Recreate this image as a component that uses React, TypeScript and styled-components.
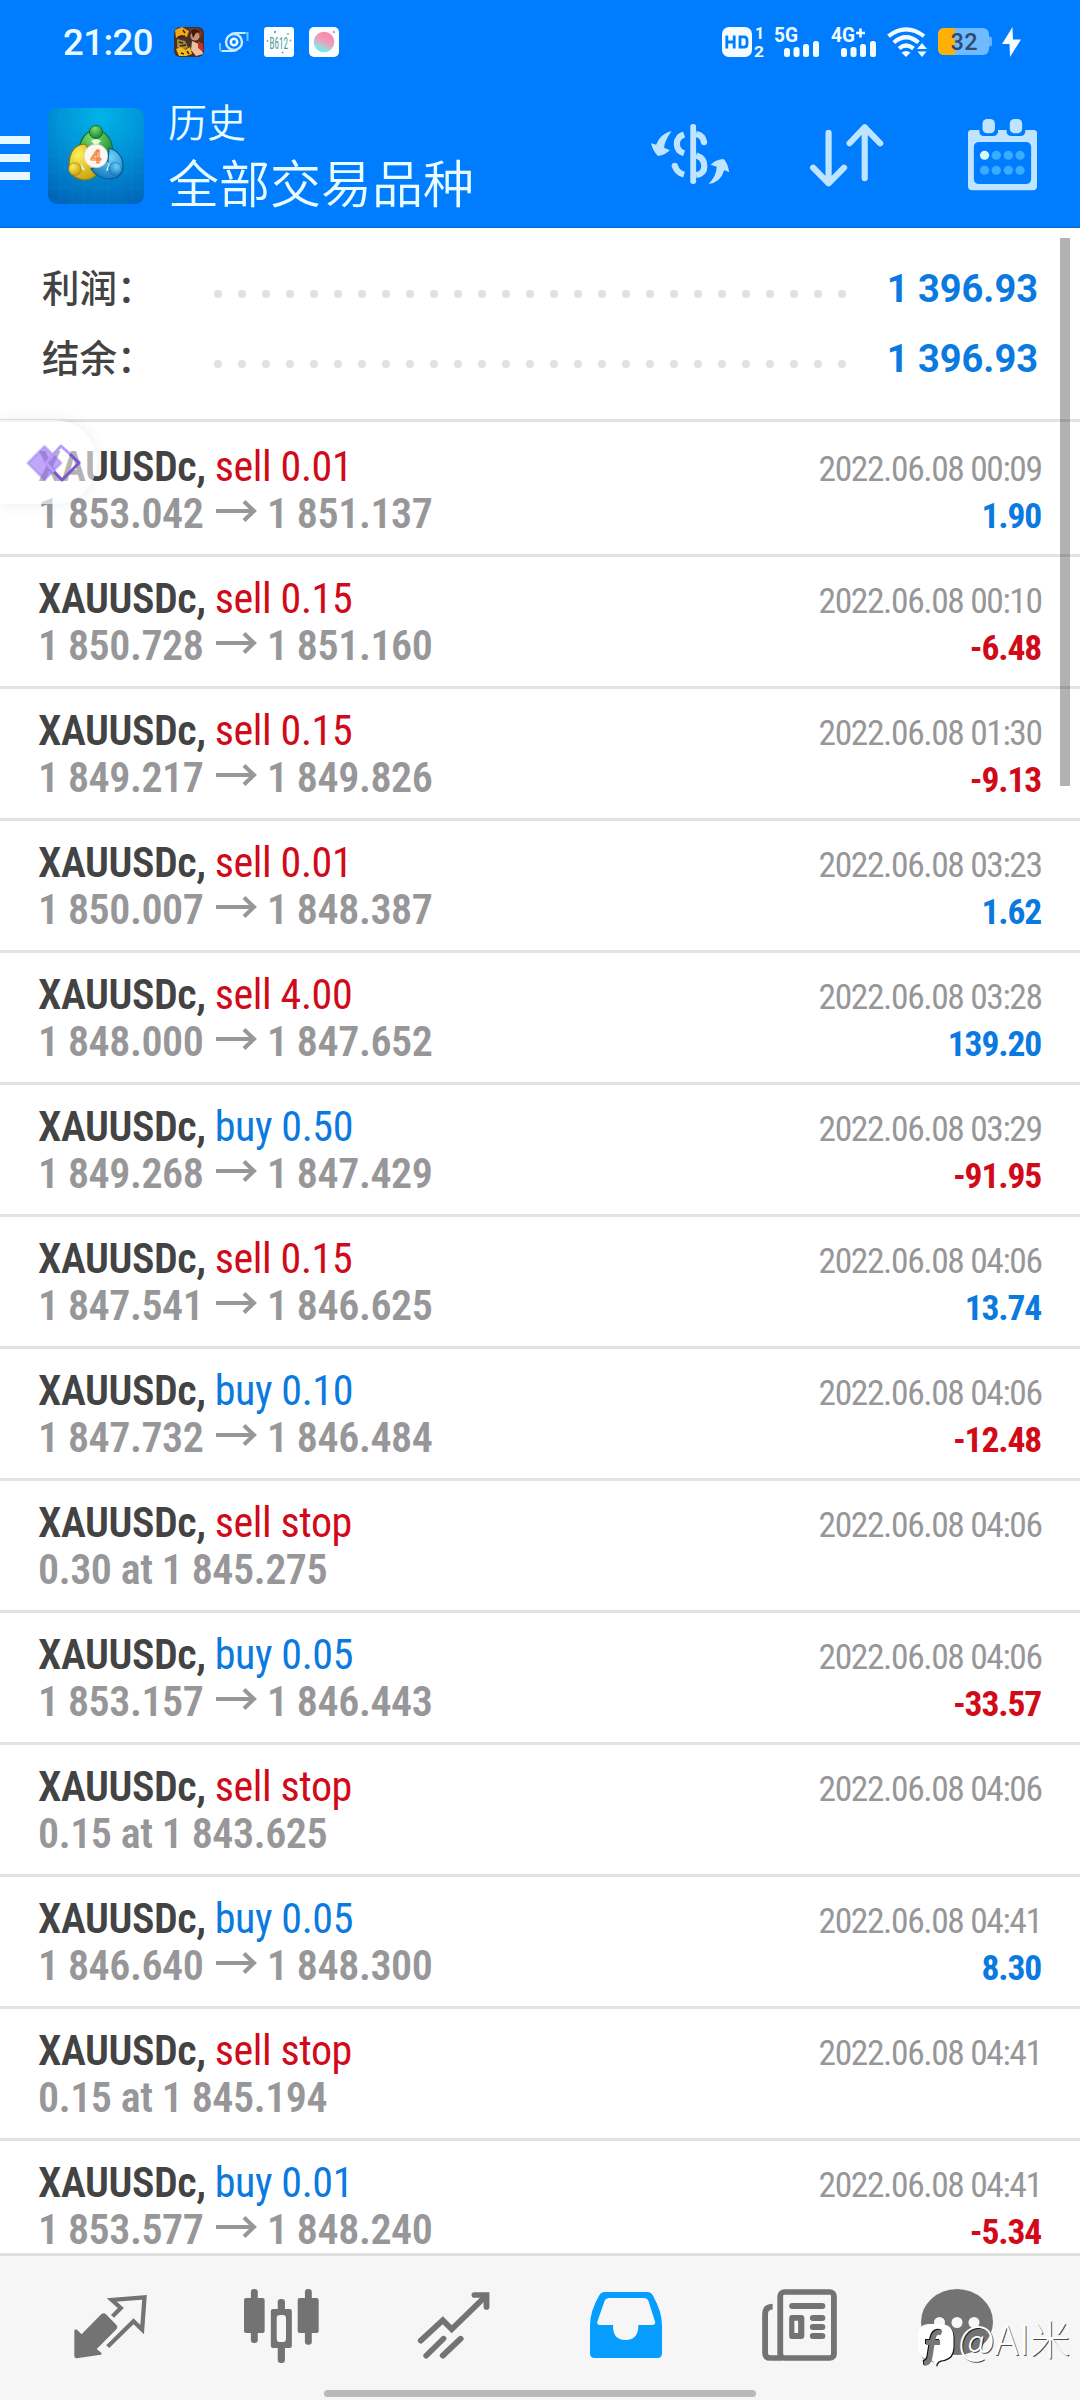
import React from "react";
import styled, { createGlobalStyle } from "styled-components";

const GlobalStyle = createGlobalStyle`
  * { box-sizing: border-box; }
  body { margin: 0; background: #fff; font-family: Roboto, "Noto Sans CJK SC", sans-serif; }
  svg { display: block; flex: none; overflow: visible; }
`;

const RED = "#d00a18";
const BLUE = "#0a7ae0";

const Screen = styled.div`
  position: relative;
  width: 1080px;
  height: 2400px;
  display: flex;
  flex-direction: column;
  overflow: hidden;
  background: #fff;
`;

/* ---------- top ---------- */
const TopBar = styled.header`
  flex: none;
  height: 228px;
  background: #007cff;
  border-bottom: 1px solid #0a66c8;
  display: flex;
  flex-direction: column;
`;
const StatusBar = styled.div`
  height: 84px;
  display: flex;
  justify-content: space-between;
  padding: 0 59px 0 63px;
  align-items: center;
`;
const StatusGroup = styled.div<{ $gap: number }>`
  display: flex;
  align-items: center;
  gap: ${(p) => p.$gap}px;
`;
const Clock = styled.span`
  width: 96px;
  color: #e9fbff;
  font-size: 36.5px;
  line-height: 44px;
  font-weight: 500;
  letter-spacing: -0.5px;
  padding-top: 2px;
`;
const Toolbar = styled.div`
  height: 144px;
  display: flex;
  align-items: flex-start;
`;
const MenuButton = styled.div`
  width: 30px;
  margin-top: 52px;
  display: flex;
  flex-direction: column;
  gap: 10px;
`;
const MenuBar = styled.i`
  height: 8px;
  background: #e6f8ff;
`;
const LogoBox = styled.div`
  margin: 24px 0 0 18px;
`;
const Titles = styled.div`
  margin: 11px 0 0 24px;
  width: 483px;
  color: #e9fcff;
  font-family: "Noto Sans CJK SC", sans-serif;
  font-weight: 350;
`;
const Caption = styled.div`
  font-size: 39px;
  line-height: 50px;
`;
const Title = styled.div`
  font-size: 51px;
  line-height: 72px;
  white-space: nowrap;
`;
const Actions = styled.div`
  display: flex;
  align-items: flex-start;
`;
const ActionButton = styled.div<{ $top: number; $right: number }>`
  padding-top: ${(p) => p.$top}px;
  margin-right: ${(p) => p.$right}px;
`;

/* ---------- summary ---------- */
const Content = styled.main`
  flex: 1;
  min-height: 0;
  overflow: hidden;
  background: #fff;
`;
const Summary = styled.section`
  height: 194px;
  padding: 25px 42px 0 42px;
  border-bottom: 3px solid #e2e2e2;
`;
const SummaryRow = styled.div`
  height: 70px;
  display: flex;
  align-items: center;
`;
const SummaryLabel = styled.span`
  width: 172px;
  color: #434343;
  font: 500 37.5px/70px "Noto Sans CJK SC", sans-serif;
  white-space: nowrap;
  padding-bottom: 4px;
`;
const Dots = styled.span`
  display: flex;
  gap: 16px;
  padding-top: 11px;
`;
const Dot = styled.i`
  width: 8px;
  height: 8px;
  border-radius: 50%;
  background: #e1e1e1;
`;
const SummaryValue = styled.span`
  margin-left: auto;
  color: ${BLUE};
  font-size: 38px;
  font-weight: 700;
  line-height: 70px;
  padding-top: 2px;
`;

/* ---------- deals ---------- */
const Deal = styled.article<{ $first: boolean }>`
  height: ${(p) => (p.$first ? 135 : 132)}px;
  padding: ${(p) => (p.$first ? 22 : 19)}px 38px 0 38px;
  border-bottom: 3px solid #e2e2e2;
  font-family: "Roboto Condensed", Roboto, sans-serif;
`;
const Line = styled.div`
  height: 46.67px;
  line-height: 46.67px;
  display: flex;
  justify-content: space-between;
  align-items: baseline;
  white-space: nowrap;
`;
const Instrument = styled.span`
  font-size: 42px;
  font-weight: 650;
  color: #434343;
  letter-spacing: -0.45px;
`;
const Side = styled.span<{ $color: string }>`
  font-weight: 400;
  color: ${(p) => p.$color};
  letter-spacing: -0.4px;
`;
const Prices = styled.span`
  display: flex;
  align-items: baseline;
  font-size: 42px;
  font-weight: 650;
  color: #979799;
  letter-spacing: -0.45px;
`;
const PriceArrow = styled.svg`
  margin: 0 10px 0 12.5px;
  position: relative;
  top: -6px;
`;
const Stamp = styled.span`
  font-size: 35.5px;
  font-weight: 400;
  color: #979799;
  letter-spacing: -1.4px;
  margin-right: 0.4px;
`;
const Amount = styled.span<{ $color: string }>`
  font-size: 35.5px;
  font-weight: 700;
  color: ${(p) => p.$color};
  letter-spacing: -1.1px;
  margin-right: 0.8px;
`;

/* ---------- overlays ---------- */
const ScrollThumb = styled.div`
  position: absolute;
  left: 1060px;
  top: 238px;
  width: 10px;
  height: 548px;
  background: rgba(0, 0, 0, 0.3);
`;
const Bubble = styled.div`
  position: absolute;
  left: 0;
  top: 420px;
  width: 97px;
  height: 84px;
  border-radius: 0 42px 42px 0;
  background: rgba(255, 255, 255, 0.6);
  box-shadow: 0 0 14px rgba(60, 60, 110, 0.09);
  padding: 22px 0 0 24px;
`;
const Watermark = styled.div`
  position: absolute;
  left: 916px;
  top: 2311px;
  display: flex;
  align-items: center;
`;
const WatermarkText = styled.span`
  margin-left: 3px;
  font: 300 40.5px/54px "Noto Sans CJK SC", sans-serif;
  color: #fff;
  text-shadow: 1px 1px 0 rgba(0, 0, 0, 0.7);
  white-space: nowrap;
  padding-bottom: 7px;
`;

/* ---------- bottom ---------- */
const BottomBar = styled.footer`
  flex: none;
  height: 147px;
  border-top: 3px solid #dfdfdf;
  background: #f6f6f6;
  display: flex;
  flex-direction: column;
  justify-content: space-between;
  align-items: center;
`;
const Tabs = styled.nav`
  width: 100%;
  height: 120px;
  padding: 33px 0 0 74px;
  display: flex;
  gap: 98px;
`;
const Tab = styled.div<{ $top?: number; $left?: number }>`
  margin-top: ${(p) => p.$top || 0}px;
  margin-left: ${(p) => p.$left || 0}px;
`;
const HomeHandle = styled.div`
  width: 432px;
  height: 7px;
  border-radius: 4px;
  background: #b9b9b9;
  margin-bottom: 3px;
`;

/* Stretches a drawing's own coordinate box over w by h pixels. */
const Art = ({ box, w, h, children }: { box: string; w: number; h: number; children: React.ReactNode }) => (
  <svg viewBox={box} width={w} height={h} preserveAspectRatio="none">{children}</svg>
);

const GameIcon = () => (
  <svg width="30" height="30" viewBox="0 0 30 30">
    <rect width="30" height="30" rx="6" fill="#4a2f26" />
    <path d="M1 3L8 0l7 4-2 6-6-2-5 3z" fill="#f0a818" />
    <path d="M14 1h10l5 5-3 6-7-4z" fill="#6e3a22" />
    <circle cx="21" cy="9" r="4.500" fill="#d09070" />
    <path d="M18 14l9 4 2 9-7 2-5-6z" fill="#efc0a0" />
    <path d="M24 14l5 3v8l-5-4z" fill="#c4302a" />
    <path d="M17 4q5-4 9 1l-4 1-3 5z" fill="#3c1c12" />
    <path d="M3 12l8 2 3 6-5 4-6-4z" fill="#a98a3c" />
    <path d="M2 22l5-2 4 3 5-3 2 7-6 2H5z" fill="#f3bd22" />
    <path d="M4 10l7-1M5 15l4 1m-3 3l6-1m-5 8l3 1m3-3l2 3M9 3l2 3" stroke="#3c2414" strokeWidth="1.500" />
  </svg>
);
const OrbitIcon = () => (
  <svg width="30" height="30" viewBox="0 0 30 30" fill="none" stroke="#c9ecff" strokeWidth="2">
    <circle cx="15" cy="15" r="8" strokeWidth="2.400" />
    <circle cx="15" cy="15" r="3.200" strokeWidth="2.600" stroke="#e9fbff" />
    <path d="M12 7Q15 6 19 6h9.500V14" stroke="#6fbfff" />
    <path d="M18 23Q15 24 11 24H2Q.8 24 1 16" stroke="#6fbfff" />
    <path d="M12 7Q15 6 19 6h7M18 23Q15 24 11 24H3" />
  </svg>
);
const CameraIcon = () => (
  <svg width="30" height="30" viewBox="0 0 30 30">
    <rect width="30" height="30" rx="3" fill="#fbffff" />
    <text x="5.500" y="21.500" fontSize="17" fontFamily="Roboto Condensed" textLength="18.500" lengthAdjust="spacingAndGlyphs" fill="#4c9c98">B612</text>
    <g fill="#7aa"><circle cx="11" cy="5" r="1.200" /><circle cx="24" cy="7" r=".9" /><circle cx="3.500" cy="14" r=".9" /><circle cx="26.500" cy="13.500" r=".9" /><circle cx="18.500" cy="25.500" r="1" /></g>
  </svg>
);
const BeautyIcon = () => (
  <svg width="30" height="30" viewBox="0 0 30 30">
    <defs>
      <linearGradient id="beauty" x1=".7" y1=".1" x2=".3" y2=".95">
        <stop offset="0" stopColor="#ff86a8" /><stop offset=".5" stopColor="#e9a3bd" /><stop offset=".8" stopColor="#90dfe0" /><stop offset="1" stopColor="#7cebe0" />
      </linearGradient>
    </defs>
    <rect width="30" height="30" rx="5" fill="#fbffff" />
    <circle cx="15" cy="15" r="10.300" fill="url(#beauty)" />
    <circle cx="25" cy="5" r="1.200" fill="#f28aa6" />
  </svg>
);

const statusText = { fontFamily: "Roboto", fontWeight: 700, fill: "#f2fcff" };

const HdIcon = () => (
  <svg width="42" height="30" viewBox="0 0 42 30">
    <rect width="30" height="30" rx="7" fill="#f4fcff" />
    <g fill="none" stroke="#007cff" strokeWidth="2.800">
      <path d="M4.800 8.500v13M12.200 8.500v13M4.800 15h7.400" />
      <path d="M18 9.800h4Q25 9.800 25 13v4q0 3.200-3 3.200h-4z" />
    </g>
    <text {...statusText} x="33" y="12" fontSize="16">1</text>
    <text {...statusText} x="32" y="29.500" fontSize="15.500" textLength="10" lengthAdjust="spacingAndGlyphs">2</text>
  </svg>
);
const Signal = ({ label, plus }: { label: string; plus?: boolean }) => (
  <svg width="46" height="30" viewBox="0 0 46 30">
    <text {...statusText} x="0" y="15" fontSize="20.500" textLength="24" lengthAdjust="spacingAndGlyphs">{label}</text>
    {plus && <path d="M25 6h9M29.500 1.500v9" stroke="#f2fcff" strokeWidth="2.600" />}
    <g fill="#f2fcff">
      <rect x="10" y="21" width="6" height="9" rx="2.500" /><rect x="19.500" y="20" width="6" height="10" rx="2.500" />
      <rect x="29" y="17" width="6" height="13" rx="2.500" /><rect x="39" y="14" width="6" height="16" rx="2.500" />
    </g>
  </svg>
);
const WifiIcon = () => (
  <svg width="40" height="30" viewBox="0 0 40 30">
    <g fill="none" stroke="#f2fcff" strokeWidth="4.200">
      <path d="M1.500 9.200Q19 -4.500 37 9.200" />
      <path d="M6.800 15.500Q19 5 31.500 15.500" />
      <path d="M12 21.500Q19 15.500 26.500 21.500" />
    </g>
    <path d="M14.500 25.500q4.500-3 9 0L19 30z" fill="#f2fcff" />
    <path d="M35 16l5 6H30zM35 30l-4.500-5.500h9z" fill="#f2fcff" />
  </svg>
);
const BatteryIcon = () => (
  <svg width="54" height="27" viewBox="0 0 54 27">
    <defs><clipPath id="cell"><rect width="51" height="27" rx="6" /></clipPath></defs>
    <rect x="49" y="8.500" width="5" height="10" rx="2.500" fill="#66b5ff" />
    <g clipPath="url(#cell)"><rect width="51" height="27" fill="#70baff" /><rect width="17" height="27" fill="#ffb005" /></g>
    <text x="12.500" y="22" fontFamily="Roboto" fontSize="23.500" fontWeight="500" fill="#2e4a70" textLength="27">32</text>
  </svg>
);
const BoltIcon = () => (
  <svg width="19" height="30" viewBox="0 0 19 30"><path d="M10.500 0L0 17h7.500L8 30 19 12.500h-8z" fill="#f4fcff" /></svg>
);

const AppLogo = () => (
  <svg width="96" height="96" viewBox="0 0 96 96">
    <defs>
      <radialGradient id="tile" cx=".55" cy=".08" r="1">
        <stop offset="0" stopColor="#00b4e8" /><stop offset=".45" stopColor="#0193d6" /><stop offset="1" stopColor="#0064b8" />
      </radialGradient>
      <radialGradient id="green" cx=".4" cy=".25" r=".8"><stop offset="0" stopColor="#7fdc6e" /><stop offset="1" stopColor="#12812c" /></radialGradient>
      <radialGradient id="yellow" cx=".3" cy=".3" r=".8"><stop offset="0" stopColor="#fff05a" /><stop offset="1" stopColor="#c39a08" /></radialGradient>
      <radialGradient id="blue" cx=".6" cy=".3" r=".8"><stop offset="0" stopColor="#6fd3fa" /><stop offset="1" stopColor="#0c6fb8" /></radialGradient>
    </defs>
    <rect width="96" height="96" rx="9" fill="url(#tile)" />
    <path d="M12 0v96M24 0v96M36 0v96M48 0v96M60 0v96M72 0v96M84 0v96M0 16h96M0 32h96M0 48h96M0 64h96M0 80h96" stroke="#5cc8ff" strokeOpacity=".07" />
    <path d="M31 46C31 31 38 22 48 22s17 10 17 24l-7 8H38z" fill="url(#green)" stroke="#0d6b35" strokeWidth="1.200" />
    <path d="M37 36q-16 1-16 22 0 12 15 14 10 0 17-10L40 40z" fill="url(#yellow)" stroke="#7d7a16" strokeWidth="1.200" />
    <path d="M61 40q14 4 14 19-1 11-13 12-12 0-19-10l17-8z" fill="url(#blue)" stroke="#075a94" strokeWidth="1.200" />
    <path d="M43 33q5-4 10 0l-4 4h-2zM33 56l4 6-6-1zM61 55l2 6-5 2z" fill="#eafbe8" />
    <circle cx="48" cy="24" r="6.500" fill="url(#green)" stroke="#0d6b35" />
    <circle cx="27" cy="61" r="6.300" fill="url(#yellow)" stroke="#9b8110" strokeWidth=".6" />
    <circle cx="67" cy="61" r="6.500" fill="url(#blue)" stroke="#1a7cbc" strokeWidth=".6" />
    <circle cx="48" cy="48" r="11.800" fill="#fbf7f2" stroke="#d5cfc4" strokeWidth=".6" />
    <text x="48" y="55" textAnchor="middle" fontFamily="Roboto" fontSize="19" fontWeight="500" fill="#ffe3c4" stroke="#f2813a" strokeWidth="1.100">4</text>
  </svg>
);

const CurrencyIcon = () => (
  <Art box="322 372 228 180" w={78.5} h={60}>
    <g fill="none" stroke="#bfe4ff" strokeWidth="18">
      <path d="M418 403Q397 411 397 432T418 460" />
      <path d="M391 496Q396 518 418 524" /><path d="M453 402Q474 406 476 428M453 466Q477 474 477 498T453 525" />
    </g>
    <g fill="#bfe4ff">
      <circle cx="391" cy="497" r="9" /><circle cx="476" cy="427" r="9" />
      <rect x="436" y="372" width="17" height="180" rx="8" />
      <path d="M382 393Q361 423 360 443L377 451Q362 466 342 468 327 452 322 430L337 434Q350 400 382 393z" />
      <path d="M489 552Q524 548 535 510L549 517Q546 490 533 477 512 478 495 494L513 500Q512 528 489 552z" />
    </g>
  </Art>
);
const SortIcon = () => (
  <Art box="782 372 213 189" w={73.3} h={63}>
    <path d="M836 398V550M791 503L836 550 881 503M941 535V382M897 430L941 382 986 430" fill="none" stroke="#bfe4ff" strokeWidth="18" strokeLinecap="round" strokeLinejoin="round" />
  </Art>
);
const CalendarIcon = () => (
  <Art box="1243 357 200 214" w={69} h={71.3}>
    <path d="M1253 390h180q10 0 10 10v158q0 13-12 13h-176q-12 0-12-13v-158q0-10 10-10zM1276 426q-16 0-16 16v94q0 16 16 16h134q16 0 16-16v-94q0-16-16-16z" fill="#bfe4ff" fillRule="evenodd" />
    <path d="M1276 388h54v8q-2 12-14 12h-26q-12 0-14-12zM1355 388h54v8q-2 12-14 12h-26q-12 0-14-12z" fill="#007cff" />
    <rect x="1285" y="357" width="36" height="43" rx="14" fill="#bfe4ff" />
    <rect x="1364" y="357" width="36" height="43" rx="14" fill="#bfe4ff" />
    {[466, 511].map((y) => [1291, 1325, 1360, 1394].map((x) => (
      <circle key={`${x}-${y}`} cx={x} cy={y} r="13.500" fill={x === 1291 && y === 466 ? "#d8faff" : "#3aacff"} />
    )))}
  </Art>
);

const GREY = "#737373";
const QuotesIcon = () => (
  <Art box="214 284 211 190" w={72.6} h={63.3}>
    <path d="M221 387l15 15 57-60q7-6 14 0l31 33q4 6 0 11l-58 60 14 12q2 3-2 5l-70 11q-7 0-7-6v-78z" fill={GREY} />
    <path d="M326 348L350 323 324 299 419 291 412 388 387 363 312 439" fill="none" stroke={GREY} strokeWidth="12.500" />
  </Art>
);
const CandlesIcon = () => (
  <Art box="709 267 217 222" w={74.7} h={74}>
    <g fill={GREY}>
      <rect x="729" y="267" width="20" height="162" rx="9" /><rect x="709" y="294" width="60" height="105" rx="6" />
      <rect x="886" y="267" width="20" height="167" rx="9" /><rect x="865" y="294" width="61" height="105" rx="6" />
      <rect x="807" y="297" width="21" height="192" rx="9" /><rect x="787" y="327" width="61" height="117" rx="6" />
    </g>
    <rect x="804" y="345" width="27" height="81" rx="10" fill="#f6f6f6" />
  </Art>
);
const TradeIcon = () => (
  <Art box="1213 275 208 199" w={71.6} h={66.3}>
    <g fill="none" stroke={GREY} strokeWidth="17" strokeLinecap="round">
      <path d="M1221 421L1285 360 1311 387 1405 292" /><path d="M1377 284H1412V320" />
      <path d="M1237 466L1287 415M1285 466L1337 415" />
    </g>
  </Art>
);
const InboxIcon = () => (
  <Art box="147 276 209 198" w={72} h={66}>
    <path d="M190 276H313Q323 276 329 286 356 334 356 376V460Q356 474 343 474H160Q147 474 147 460V376Q147 334 174 286 180 276 190 276zM204 294Q193 294 189 304L168 366Q167 375 176 375H214V384Q216 420 250 420T287 384V375H328Q337 375 336 366L317 304Q313 294 303 294z" fill="#079dff" fillRule="evenodd" />
  </Art>
);
const NewsIcon = () => (
  <Art box="646 267 217 216" w={74.7} h={72}>
    <g fill="none" stroke={GREY} strokeWidth="17">
      <rect x="699" y="276" width="156" height="198" rx="12" />
      <path d="M677 320Q655 320 655 342V458Q655 474 671 474H706" />
    </g>
    <g fill={GREY}>
      <rect x="725" y="309" width="105" height="18" rx="9" />
      <rect x="785" y="345" width="45" height="18" rx="9" /><rect x="785" y="372" width="45" height="18" rx="9" /><rect x="785" y="399" width="45" height="18" rx="9" />
      <path d="M733 345h27q9 0 9 9v54q0 9-9 9h-27q-8 0-8-9v-54q0-9 8-9zM740 362v37h11v-37z" fillRule="evenodd" />
    </g>
  </Art>
);
const ChatIcon = () => (
  <svg width="72" height="66" viewBox="0 0 72 66">
    <ellipse cx="36" cy="33" rx="36" ry="33" fill={GREY} />
    <g fill="#f8f8f8"><circle cx="18.500" cy="33.500" r="5.500" /><circle cx="36" cy="33.500" r="5.500" /><circle cx="53" cy="33.500" r="5.500" /></g>
  </svg>
);
const WatermarkMark = () => (
  <svg width="39" height="54" viewBox="0 0 39 54">
    <path d="M12 9h14q11 1 11.500 13v10Q37 43 28 45q-7 0-8 6-2-5-6-6Q3 44 2 34V20Q2 10 12 9z" fill="#111" transform="translate(1 1)" />
    <path d="M12 9h14q11 1 11.500 13v10Q37 43 28 45q-7 0-8 6-2-5-6-6Q3 44 2 34V20Q2 10 12 9z" fill="#fff" />
    <path d="M25.500 18Q18 15 16.500 26L14 42q-1 6-6 6.500M10 27.500h14" transform="translate(-1 -1)" fill="none" stroke="#111" strokeWidth="5" />
    <path d="M25.500 18Q18 15 16.500 26L14 42q-1 6-6 6.500M10 27.500h14" fill="none" stroke="#777" strokeWidth="5" />
  </svg>
);

type DealData = { side: "sell" | "buy"; size: string; from?: string; to?: string; order?: string; at: string; result?: string };
const deals: DealData[] = [
  { side: "sell", size: "0.01", from: "1 853.042", to: "1 851.137", at: "2022.06.08 00:09", result: "1.90" },
  { side: "sell", size: "0.15", from: "1 850.728", to: "1 851.160", at: "2022.06.08 00:10", result: "-6.48" },
  { side: "sell", size: "0.15", from: "1 849.217", to: "1 849.826", at: "2022.06.08 01:30", result: "-9.13" },
  { side: "sell", size: "0.01", from: "1 850.007", to: "1 848.387", at: "2022.06.08 03:23", result: "1.62" },
  { side: "sell", size: "4.00", from: "1 848.000", to: "1 847.652", at: "2022.06.08 03:28", result: "139.20" },
  { side: "buy", size: "0.50", from: "1 849.268", to: "1 847.429", at: "2022.06.08 03:29", result: "-91.95" },
  { side: "sell", size: "0.15", from: "1 847.541", to: "1 846.625", at: "2022.06.08 04:06", result: "13.74" },
  { side: "buy", size: "0.10", from: "1 847.732", to: "1 846.484", at: "2022.06.08 04:06", result: "-12.48" },
  { side: "sell", size: "stop", order: "0.30 at 1 845.275", at: "2022.06.08 04:06" },
  { side: "buy", size: "0.05", from: "1 853.157", to: "1 846.443", at: "2022.06.08 04:06", result: "-33.57" },
  { side: "sell", size: "stop", order: "0.15 at 1 843.625", at: "2022.06.08 04:06" },
  { side: "buy", size: "0.05", from: "1 846.640", to: "1 848.300", at: "2022.06.08 04:41", result: "8.30" },
  { side: "sell", size: "stop", order: "0.15 at 1 845.194", at: "2022.06.08 04:41" },
  { side: "buy", size: "0.01", from: "1 853.577", to: "1 848.240", at: "2022.06.08 04:41", result: "-5.34" },
];

const DealRow = ({ deal, first }: { deal: DealData; first: boolean }) => (
  <Deal $first={first}>
    <Line>
      <Instrument>XAUUSDc, <Side $color={deal.side === "sell" ? RED : BLUE}>{deal.side} {deal.size}</Side></Instrument>
      <Stamp>{deal.at}</Stamp>
    </Line>
    <Line>
      {deal.order ? <Prices>{deal.order}</Prices> : (
        <Prices>
          <span>{deal.from}</span>
          <PriceArrow width="41" height="22" viewBox="0 0 41 22">
            <path d="M0 11H38M28 1.500L38 11 28 20.500" fill="none" stroke="#979799" strokeWidth="4" />
          </PriceArrow>
          <span>{deal.to}</span>
        </Prices>
      )}
      {deal.result && <Amount $color={deal.result.startsWith("-") ? RED : BLUE}>{deal.result}</Amount>}
    </Line>
  </Deal>
);

export default function App() {
  return (
    <Screen>
      <GlobalStyle />
      <TopBar>
        <StatusBar>
          <StatusGroup $gap={15}>
            <Clock>21:20</Clock>
            <GameIcon /><OrbitIcon /><CameraIcon /><BeautyIcon />
          </StatusGroup>
          <StatusGroup $gap={10.4}>
            <HdIcon /><Signal label="5G" /><Signal label="4G" plus /><WifiIcon /><BatteryIcon /><BoltIcon />
          </StatusGroup>
        </StatusBar>
        <Toolbar>
          <MenuButton><MenuBar /><MenuBar /><MenuBar /></MenuButton>
          <LogoBox><AppLogo /></LogoBox>
          <Titles>
            <Caption>历史</Caption>
            <Title>全部交易品种</Title>
          </Titles>
          <Actions>
            <ActionButton $top={40} $right={80}><CurrencyIcon /></ActionButton>
            <ActionButton $top={40} $right={85.5}><SortIcon /></ActionButton>
            <ActionButton $top={35} $right={0}><CalendarIcon /></ActionButton>
          </Actions>
        </Toolbar>
      </TopBar>
      <Content>
        <Summary>
          {["利润：", "结余："].map((label) => (
            <SummaryRow key={label}>
              <SummaryLabel>{label}</SummaryLabel>
              <Dots>{Array.from({ length: 27 }, (_, i) => <Dot key={i} />)}</Dots>
              <SummaryValue>1 396.93</SummaryValue>
            </SummaryRow>
          ))}
        </Summary>
        {deals.map((deal, i) => <DealRow key={i} deal={deal} first={i === 0} />)}
      </Content>
      <BottomBar>
        <Tabs>
          <Tab $top={6}><QuotesIcon /></Tab>
          <Tab $left={-0.5}><CandlesIcon /></Tab>
          <Tab $top={3} $left={1}><TradeIcon /></Tab>
          <Tab $top={3} $left={3}><InboxIcon /></Tab>
          <Tab $left={1.5}><NewsIcon /></Tab>
          <Tab $left={-13.5}><ChatIcon /></Tab>
        </Tabs>
        <HomeHandle />
      </BottomBar>
      <ScrollThumb />
      <Bubble>
        <svg width="60" height="42" viewBox="0 0 60 42">
          <path d="M20.500 4L37.500 21 20.500 38 3.500 21z" fill="#8b5cf6" fillOpacity=".55" stroke="#8b5cf6" strokeOpacity=".3" strokeWidth="2.500" strokeLinejoin="round" />
          <path d="M37 37L22 21 37 4 56 21" fill="none" stroke="#b79df7" strokeWidth="3" strokeLinejoin="round" />
          <path d="M46 12L55 21 38 38 30 30" fill="none" stroke="#7d56cf" strokeWidth="3" strokeLinejoin="round" />
        </svg>
      </Bubble>
      <Watermark>
        <WatermarkMark />
        <WatermarkText>@AI米</WatermarkText>
      </Watermark>
    </Screen>
  );
}
